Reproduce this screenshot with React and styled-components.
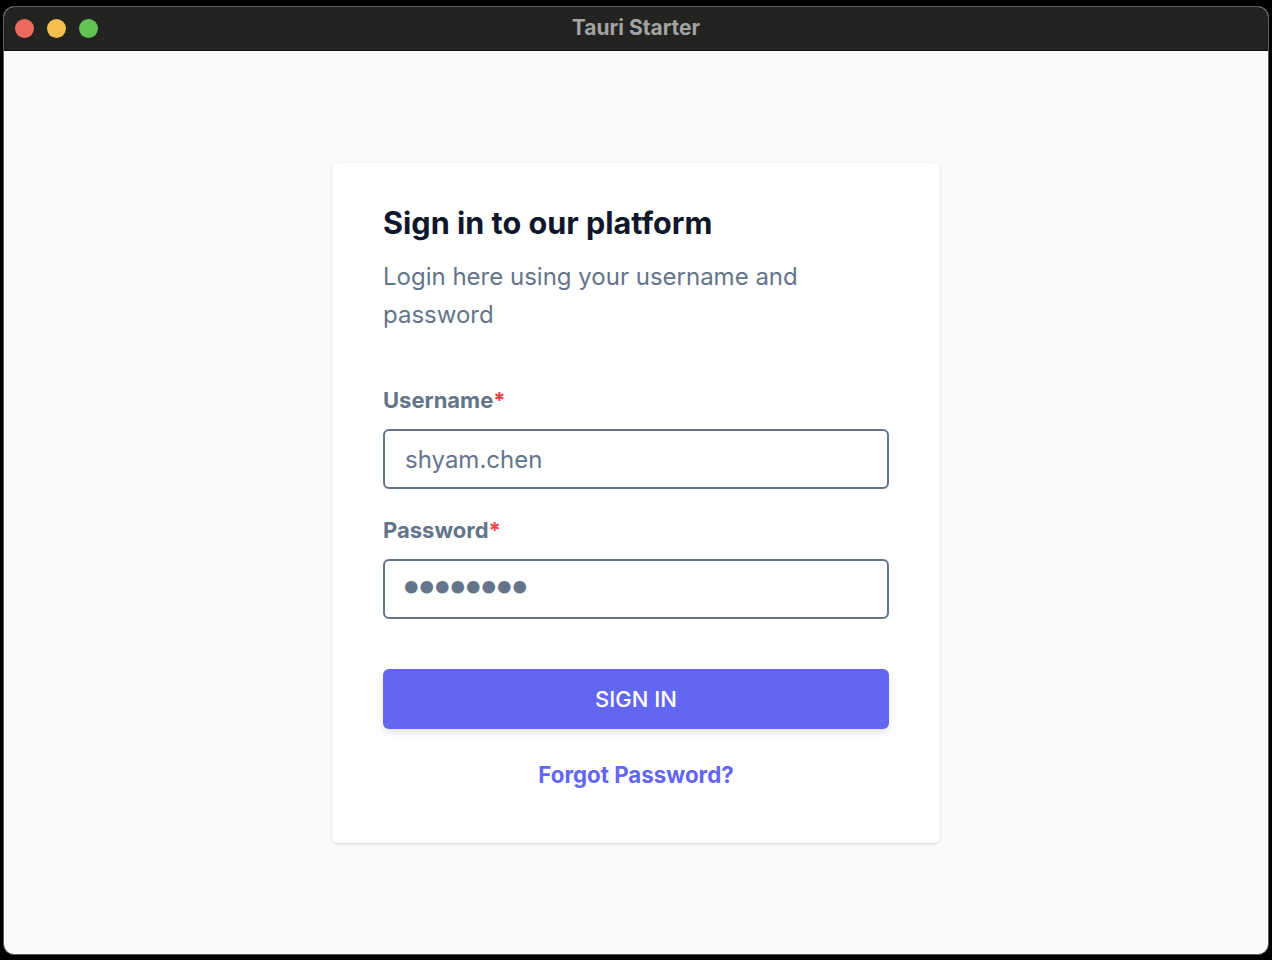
import React, { useState } from "react";
import styled, { createGlobalStyle } from "styled-components";

const GlobalStyle = createGlobalStyle`
  html, body {
    margin: 0;
    padding: 0;
    background: #000;
  }
  body {
    font-family: Inter, "Noto Sans", sans-serif;
  }
  * {
    box-sizing: border-box;
  }
`;

function App() {
  const [username, setUsername] = useState("shyam.chen");
  const [password, setPassword] = useState("12345678");

  return (
    <Screen>
      <GlobalStyle />
      <Window>
        <TitleBar>
          <Lights>
            <Light color="#ed6a5e" />
            <Light color="#f5bf4f" />
            <Light color="#61c554" />
          </Lights>
          <Title>Tauri Starter</Title>
        </TitleBar>
        <Content>
          <Card>
            <Heading>Sign in to our platform</Heading>
            <Subtitle>Login here using your username and password</Subtitle>
            <Form onSubmit={(e) => e.preventDefault()}>
              <Field>
                <Label>
                  Username<Required>*</Required>
                </Label>
                <Input
                  value={username}
                  onChange={(e) => setUsername(e.target.value)}
                />
              </Field>
              <Field>
                <Label>
                  Password<Required>*</Required>
                </Label>
                <Input
                  type="password"
                  $secret
                  value={password}
                  onChange={(e) => setPassword(e.target.value)}
                />
              </Field>
              <Button type="submit">SIGN IN</Button>
              <Forgot href="#">Forgot Password?</Forgot>
            </Form>
          </Card>
        </Content>
      </Window>
    </Screen>
  );
}

const Screen = styled.div`
  width: 1272px;
  height: 960px;
  background: #000;
  padding: 6px 3px 5px 3px;
`;

const Window = styled.div`
  height: 100%;
  display: flex;
  flex-direction: column;
  border-radius: 11px;
  overflow: hidden;
  border: 1px solid #5a5a5a;
  background: #f8fafc;
`;

const TitleBar = styled.div`
  position: relative;
  height: 44px;
  flex: none;
  background: #232321;
  display: flex;
  align-items: center;
  justify-content: center;
  border-bottom: 1px solid #111;
`;

const Lights = styled.div`
  position: absolute;
  left: 11px;
  top: 12px;
  display: flex;
  gap: 13px;
`;

const Light = styled.span`
  width: 19px;
  height: 19px;
  border-radius: 50%;
  background: ${(p) => p.color};
`;

const Title = styled.div`
  font-family: Inter, "Noto Sans", sans-serif;
  font-weight: 700;
  font-size: 21px;
  color: #a3a3a3;
  margin-top: -2px;
`;

const Content = styled.div`
  flex: 1;
  display: flex;
  justify-content: center;
  padding-top: 112px;
`;

const Card = styled.div`
  width: 608px;
  height: 680px;
  background: #fff;
  border-radius: 6px;
  box-shadow: 0 1px 3px rgba(0, 0, 0, 0.1), 0 1px 2px rgba(0, 0, 0, 0.06);
  padding: 40px 51px;
`;

const Heading = styled.h1`
  margin: 0;
  font-size: 30.6px;
  line-height: 40px;
  font-weight: 700;
  color: #0f172a;
`;

const Subtitle = styled.p`
  margin: 15px 0 0;
  font-size: 24px;
  line-height: 38px;
  color: #64748b;
  max-width: 440px;
`;

const Form = styled.form`
  margin-top: 52px;
  display: flex;
  flex-direction: column;
`;

const Field = styled.div`
  display: flex;
  flex-direction: column;
  gap: 15px;
  margin-bottom: 27px;
`;

const Label = styled.label`
  font-size: 22px;
  line-height: 28px;
  font-weight: 700;
  color: #64748b;
`;

const Required = styled.span`
  color: #ef4444;
`;

const Input = styled.input`
  height: 60px;
  width: 100%;
  border: 2px solid #64748b;
  border-radius: 6px;
  padding: ${(p) => (p.$secret ? "0 15px 9px" : "0 20px")};
  font-family: Inter, "Noto Sans", sans-serif;
  font-size: ${(p) => (p.$secret ? "40px" : "24px")};
  letter-spacing: ${(p) => (p.$secret ? "-7px" : "normal")};
  color: #64748b;
  background: #fff;
  outline: none;
`;

const Button = styled.button`
  margin-top: 23px;
  height: 60px;
  width: 100%;
  border: none;
  border-radius: 6px;
  background: #6366f1;
  color: #fff;
  font-family: Inter, "Noto Sans", sans-serif;
  font-size: 22px;
  font-weight: 500;
  box-shadow: 0 4px 6px rgba(0, 0, 0, 0.1);
  cursor: pointer;
`;

const Forgot = styled.a`
  margin-top: 32px;
  align-self: center;
  font-size: 22.3px;
  font-weight: 700;
  color: #6366f1;
  text-decoration: none;
`;

export default App;
